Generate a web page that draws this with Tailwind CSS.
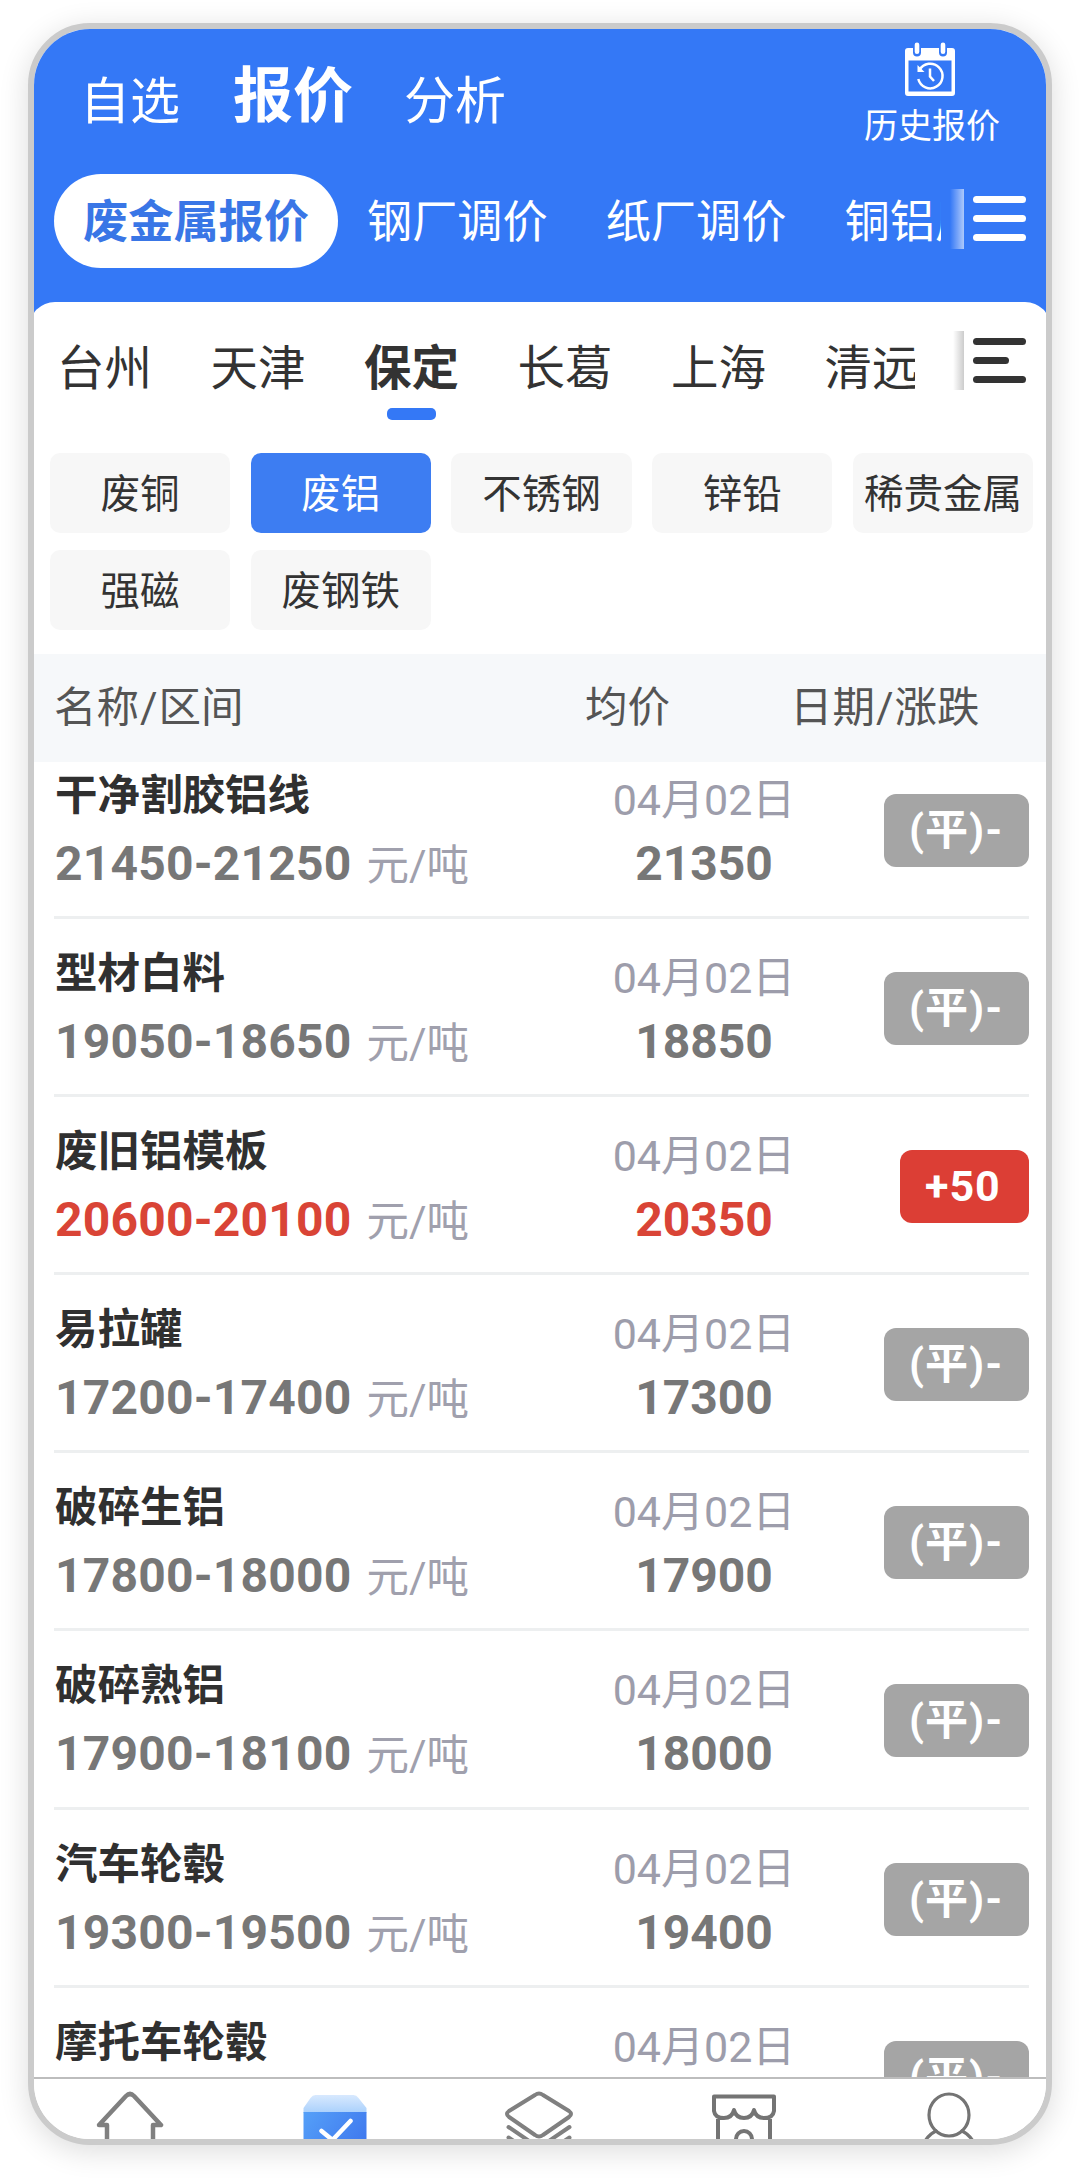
<!DOCTYPE html>
<html lang="zh-CN">
<head>
<meta charset="utf-8">
<title>报价</title>
<script src="https://cdn.jsdelivr.net/npm/@tailwindcss/browser@4"></script>
</head>
<body class="h-[2179px] overflow-hidden bg-white pt-[23px] pl-[28px] font-[Roboto,'Noto_Sans_CJK_SC',sans-serif]">
<div class="flex h-[2122px] w-[1024px] flex-col overflow-hidden rounded-[62px] border-6 border-[#cbcbcb] bg-white shadow-[0_6px_30px_rgba(0,0,0,0.14)]">

  <header class="h-[300px] shrink-0 bg-[#3478f6] text-white">
    <div class="flex h-[145px] justify-between pr-[46px] pl-[46px]">
      <nav class="flex items-start whitespace-nowrap">
        <a class="mt-[43px] text-[50px] leading-[60px]">自选</a>
        <a class="mt-[32px] ml-[53px] text-[60px] leading-[72px] font-bold">报价</a>
        <a class="mt-[43px] ml-[51px] text-[51px] leading-[60px]">分析</a>
      </nav>
      <div class="flex flex-col items-center pt-[13px]">
        <svg class="-ml-[5px] h-[54px] w-[52px]" viewBox="0 0 52 54" fill="none">
          <path d="M4 6h6v3a4 4 0 0 0 6 0V6h19v3a4 4 0 0 0 6 0V6h7q3 0 3 3v42q0 3-3 3H4q-3 0-3-3V9q0-3 3-3Z" fill="#fff"/>
          <rect x="4.500" y="18.500" width="43" height="31" fill="#3478f6"/>
          <path d="M13 2.500v8M39 2.500v8" stroke="#3478f6" stroke-width="8" stroke-linecap="round"/>
          <path d="M13 2.800v7M39 2.800v7" stroke="#fff" stroke-width="4.600" stroke-linecap="round"/>
          <path d="M15.500 28A12.300 12.300 0 1 1 14.300 37M26 26.500v8l4 4.500" stroke="#fff" stroke-width="2.500"/>
          <path d="M13.500 23v7h7Z" fill="#fff"/>
        </svg>
        <span class="mt-[5px] text-[34px] leading-[50px]">历史报价</span>
      </div>
    </div>
    <div class="flex h-[94px] items-center pl-[20px] text-[45.200px] whitespace-nowrap">
      <div class="flex h-[94px] w-[284px] shrink-0 items-center justify-center rounded-full bg-white pt-[4px] font-bold text-[#3976e6]">废金属报价</div>
      <div class="ml-[29px] flex w-[574px] shrink-0 gap-[58px] overflow-hidden pt-[4px]"><span>钢厂调价</span><span>纸厂调价</span><span>铜铝厂调价</span></div>
      <div class="-mt-[4px] ml-[9px] h-[60px] w-[14px] shrink-0 bg-linear-to-r from-white/0 to-white/60"></div>
      <div class="-mt-[5px] ml-[9px] flex w-[53px] shrink-0 flex-col gap-[12px]">
        <i class="h-[7px] rounded-full bg-white"></i><i class="h-[7px] rounded-full bg-white"></i><i class="h-[7px] rounded-full bg-white"></i>
      </div>
    </div>
  </header>

  <section class="-mx-[5px] -mt-[27px] h-[352px] shrink-0 rounded-t-[26px] bg-white px-[21px]">
    <div class="flex h-[151px] items-start text-[47.500px] leading-[60px] whitespace-nowrap text-[#333]">
      <div class="ml-[7px] flex w-[858px] shrink-0 gap-[58.500px] overflow-hidden pt-[37px]">
        <span>台州</span><span>天津</span>
        <span class="flex flex-col items-center font-bold">保定<i class="mt-[9px] h-[12px] w-[49px] rounded-[5px] bg-[#3478f6]"></i></span>
        <span>长葛</span><span>上海</span><span>清远</span>
      </div>
      <div class="mt-[29px] ml-[38px] h-[59px] w-[11px] shrink-0 bg-linear-to-r from-black/0 to-black/20"></div>
      <div class="mt-[36px] ml-[9px] flex w-[53px] shrink-0 flex-col gap-[12px]">
        <i class="h-[7px] rounded-full bg-[#333]"></i><i class="h-[7px] w-[36px] rounded-full bg-[#333]"></i><i class="h-[7px] rounded-full bg-[#333]"></i>
      </div>
    </div>
    <div class="grid w-[983px] grid-cols-5 gap-x-[20.500px] gap-y-[17px] text-center text-[39.500px] leading-[83px] whitespace-nowrap text-[#333]">
      <span class="h-[80px] rounded-[10px] bg-[#f7f7f7]">废铜</span>
      <span class="h-[80px] rounded-[10px] bg-[#3d7df2] text-white">废铝</span>
      <span class="h-[80px] rounded-[10px] bg-[#f7f7f7]">不锈钢</span>
      <span class="h-[80px] rounded-[10px] bg-[#f7f7f7]">锌铅</span>
      <span class="h-[80px] rounded-[10px] bg-[#f7f7f7]">稀贵金属</span>
      <span class="h-[80px] rounded-[10px] bg-[#f7f7f7]">强磁</span>
      <span class="h-[80px] rounded-[10px] bg-[#f7f7f7]">废钢铁</span>
    </div>
  </section>

  <div class="grid h-[108px] shrink-0 grid-cols-[531px_205px_1fr] items-center bg-[#f6f8fa] pl-[20px] text-[42.500px] text-[#555]">
    <span>名称<span class="px-[1px]">/</span>区间</span><span>均价</span><span>日期<span class="px-[1px]">/</span>涨跌</span>
  </div>

  <main class="min-h-0 flex-1 overflow-hidden px-[20px]">
    <div id="list" class="-mt-[21px] w-[975px]"></div>
  </main>

  <nav class="h-[62px] shrink-0 overflow-hidden border-t-2 border-[#bdbdbd] bg-white">
    <div class="-ml-[6px] grid w-[1023px] grid-cols-5 justify-items-center">
      <svg class="h-[60px] w-[72px]" viewBox="0 0 72 60" fill="none" stroke="#808080" stroke-width="4.500" stroke-linejoin="round" stroke-linecap="round">
        <path d="M13 80V46H5L32 17q4-4 8 0L67 46h-8v34" />
      </svg>
      <svg class="h-[60px] w-[72px]" viewBox="0 0 72 60" fill="none">
        <defs>
          <linearGradient id="lid" x1="0" y1="0" x2="0" y2="1"><stop stop-color="#d8e9fe"/><stop offset="1" stop-color="#a9d0fc"/></linearGradient>
          <linearGradient id="front" x1="0" y1="0" x2="1" y2=".6"><stop stop-color="#55a0f8"/><stop offset="1" stop-color="#3f78ee"/></linearGradient>
        </defs>
        <path d="M4.500 34V29l7-10q2-3 5-3h38q3 0 5 3l8 10v5Z" fill="url(#lid)"/>
        <path d="M4.500 33h63v50h-63Z" fill="url(#front)"/>
        <path d="M22.500 52l11 9 18-19" stroke="#fff" stroke-width="4.500" stroke-linecap="round"/>
      </svg>
      <svg class="h-[60px] w-[72px]" viewBox="0 0 72 60" fill="none" stroke="#808080" stroke-width="4" stroke-linejoin="round" stroke-linecap="round">
        <path d="M32 16q4-3 8 0l26 16q4 3 0 6L40 56q-4 3-8 0L6 38q-4-3 0-6ZM5.500 48L32 66q4 3 8 0L66.500 48M5.500 58.500L32 76M66.500 58.500L40 76"/>
      </svg>
      <svg class="h-[60px] w-[72px]" viewBox="0 0 72 60" fill="none" stroke="#747474" stroke-width="4" stroke-linejoin="round" stroke-linecap="round">
        <path d="M6 17.500h60V32q-1 7-10 7-8 0-10-8-2 8-10 8t-10-8q-2 8-10 8-9 0-10-7ZM10 38v40M62 38v40M28 66V60a8 8 0 0 1 16 0v6"/>
      </svg>
      <svg class="h-[60px] w-[72px]" viewBox="0 0 72 60" fill="none" stroke="#747474" stroke-width="3.200" stroke-linecap="round">
        <ellipse cx="36" cy="36" rx="20" ry="21"/>
        <path d="M23 52Q14 56 9 68M49 52Q58 56 63 68"/>
      </svg>
    </div>
  </nav>
</div>

<script>
  const quotes = [
    ['干净割胶铝线', '21450-21250', '21350', 0],
    ['型材白料', '19050-18650', '18850', 0],
    ['废旧铝模板', '20600-20100', '20350', 50],
    ['易拉罐', '17200-17400', '17300', 0],
    ['破碎生铝', '17800-18000', '17900', 0],
    ['破碎熟铝', '17900-18100', '18000', 0],
    ['汽车轮毂', '19300-19500', '19400', 0],
    ['摩托车轮毂', '', '', 0],
  ];
  document.getElementById('list').innerHTML = quotes.map(([name, range, avg, diff]) => `
    <div class="grid h-[178.100px] grid-cols-[558px_184px_1fr] border-b-3 border-[#edeff0] whitespace-nowrap">
      <div class="pt-[25px] pl-px leading-[60px]">
        <div class="text-[42.500px] font-bold text-[#303030]">${name}</div>
        ${range ? `<div class="mt-[8px] flex items-baseline"><span class="text-[48px] font-bold tracking-[0.2px] ${diff ? 'text-[#d94436]' : 'text-[#777]'}">${range}</span><span class="ml-[15px] text-[42.500px] text-[#a0a0ad]">元/吨</span></div>` : ''}
      </div>
      <div class="pt-[29px] text-center leading-[60px]">
        <div class="text-[43px] text-[#9d9dab]">04月02日</div>
        <div class="mt-[4px] text-[48px] font-bold ${diff ? 'text-[#d94436]' : 'text-[#777]'}">${avg}</div>
      </div>
      <div class="mt-[53px] h-[73px] justify-self-end rounded-[12px] px-[25px] text-[43px] leading-[73px] font-bold tracking-[1px] text-white ${diff ? 'w-[129px] bg-[#dc3e35]' : 'w-[145px] bg-[#a5a5a5]'}">${diff ? '+' + diff : '(平)-'}</div>
    </div>`).join('');
</script>
</body>
</html>
